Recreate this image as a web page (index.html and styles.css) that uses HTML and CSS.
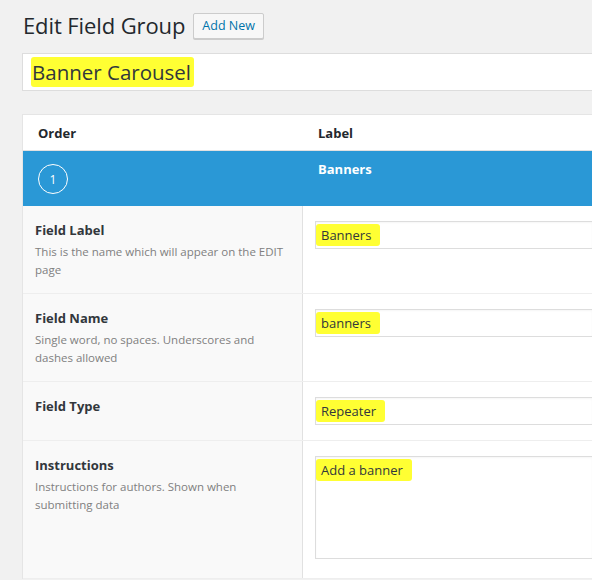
FILE: index.html
```html
<!DOCTYPE html>
<html>
<head>
<meta charset="utf-8">
<link rel="stylesheet" href="styles.css">
</head>
<body>
<div class="wrap">
  <div class="heading">
    <h1>Edit Field Group</h1>
    <a class="btn">Add New</a>
  </div>
  <div class="title-input"><span class="hl">Banner Carousel</span></div>
  <div class="fields">
    <div class="thead">
      <div class="col-order">Order</div>
      <div class="col-label">Label</div>
    </div>
    <div class="field-row">
      <div class="col-order"><span class="num">1</span></div>
      <div class="col-label"><strong>Banners</strong></div>
    </div>
    <div class="settings">
      <div class="setting">
        <div class="s-label">
          <div class="s-title">Field Label</div>
          <div class="s-desc">This is the name which will appear on the EDIT page</div>
        </div>
        <div class="s-input"><div class="input"><span class="hl">Banners</span></div></div>
      </div>
      <div class="setting">
        <div class="s-label">
          <div class="s-title">Field Name</div>
          <div class="s-desc">Single word, no spaces. Underscores and dashes allowed</div>
        </div>
        <div class="s-input"><div class="input"><span class="hl">banners</span></div></div>
      </div>
      <div class="setting short">
        <div class="s-label">
          <div class="s-title">Field Type</div>
        </div>
        <div class="s-input"><div class="input"><span class="hl">Repeater</span></div></div>
      </div>
      <div class="setting tall">
        <div class="s-label">
          <div class="s-title">Instructions</div>
          <div class="s-desc">Instructions for authors. Shown when submitting data</div>
        </div>
        <div class="s-input"><div class="input textarea"><span class="hl">Add a banner</span></div></div>
      </div>
    </div>
  </div>
</div>
</body>
</html>
```
FILE: styles.css
```css
html, body {
  margin: 0;
  padding: 0;
  background: #f1f1f1;
  font-family: "Open Sans", "Noto Sans", sans-serif;
  color: #23282d;
  overflow: hidden;
}
.wrap {
  padding: 0 0 0 22px;
}
.heading {
  display: flex;
  align-items: center;
  height: 51px;
  padding-left: 1px;
}
h1 {
  margin: 0 8px 0 0;
  font-size: 22px;
  font-weight: 400;
  line-height: 29px;
  color: #23282d;
  letter-spacing: -0.1px;
}
.btn {
  display: inline-block;
  box-sizing: border-box;
  height: 26px;
  line-height: 24px;
  padding: 0 8px;
  font-size: 12.5px;
  color: #0073aa;
  background: #f7f7f7;
  border: 1px solid #ccc;
  border-radius: 2px;
  box-shadow: 0 1px 0 #ccc;
}
.title-input {
  box-sizing: border-box;
  height: 38px;
  margin-top: 2px;
  background: #fff;
  border: 1px solid #ddd;
  border-right: 0;
  padding: 4px 8px;
  font-size: 20.5px;
  line-height: 28px;
  color: #32373c;
}
.title-input .hl {
  padding: 1px 3px 1px 1px;
}
.hl {
  background: #ffff33;
  border-radius: 3px;
  padding: 2px 9px 2px 5px;
}
.fields {
  margin-top: 23px;
  background: #fff;
  border: 1px solid #e5e5e5;
  border-right: 0;
  border-bottom: 0;
}
.thead {
  display: flex;
  height: 35px;
  align-items: center;
  font-size: 13px;
  font-weight: 700;
  color: #23282d;
  border-bottom: 1px solid #e1e1e1;
}
.thead .col-order { width: 280px; padding-left: 15px; box-sizing: border-box; }
.thead .col-label { padding-left: 15px; }
.field-row {
  display: flex;
  height: 55px;
  background: #2a98d6;
  color: #fff;
  font-size: 13px;
}
.field-row .col-order {
  width: 280px;
  display: flex;
  align-items: center;
  padding-left: 15px;
  box-sizing: border-box;
}
.field-row .col-label {
  padding-top: 9px;
  padding-left: 15px;
}
.num {
  display: inline-flex;
  align-items: center;
  justify-content: center;
  box-sizing: border-box;
  width: 30px;
  height: 30px;
  border: 1px solid #fff;
  border-radius: 50%;
  font-size: 12px;
  margin-top: 1px;
}
.settings {
  border-left: 1px solid #e5e5e5;
  margin-left: -1px;
}
.setting {
  display: flex;
  height: 87px;
  border-bottom: 1px solid #eee;
}
.setting.short { height: 58px; }
.setting.tall { height: 137px; }
.s-label {
  width: 280px;
  box-sizing: border-box;
  background: #f9f9f9;
  border-right: 1px solid #e1e1e1;
  padding: 14px 12px 0 12px;
}
.s-title {
  font-size: 13px;
  font-weight: 700;
  color: #32373c;
  line-height: 20px;
}
.s-desc {
  font-size: 11.5px;
  line-height: 18px;
  color: #808080;
  margin-top: 3px;
}
.s-input {
  flex: 1;
  padding: 15px 0 0 12px;
}
.input {
  box-sizing: border-box;
  height: 28px;
  border: 1px solid #ddd;
  border-right: 0;
  background: #fff;
  box-shadow: inset 0 1px 2px rgba(0,0,0,0.04);
  padding: 3px 0;
  font-size: 13px;
  line-height: 20px;
  color: #32373c;
}
.input.textarea {
  height: 103px;
}
```
